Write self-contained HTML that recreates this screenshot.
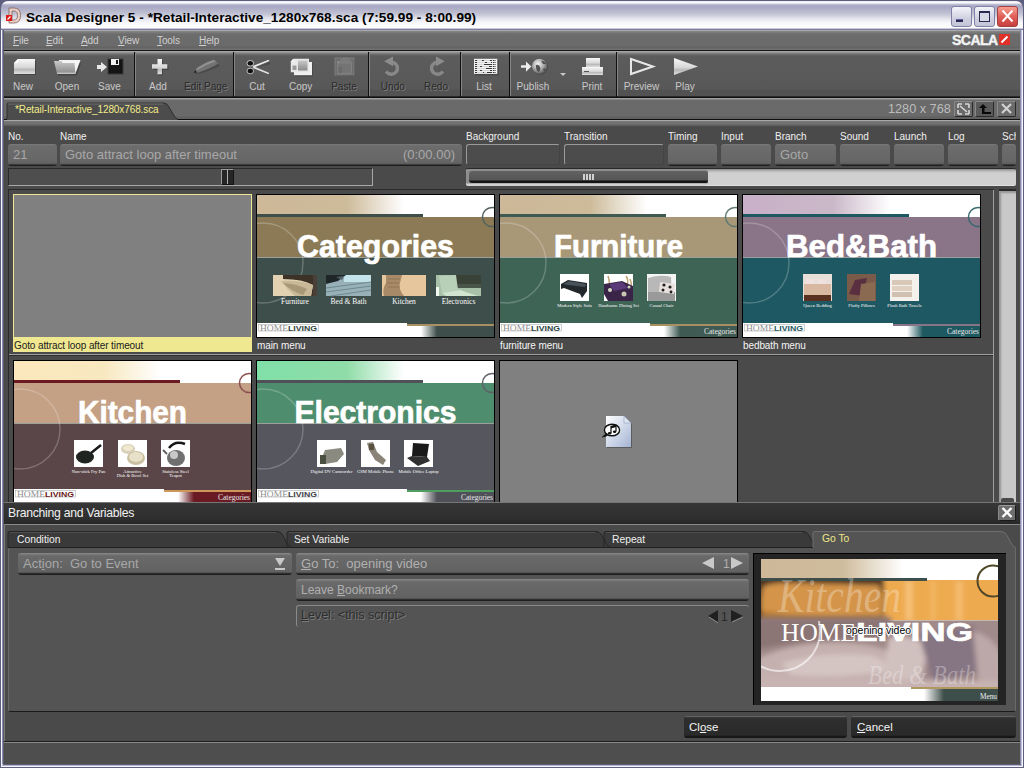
<!DOCTYPE html>
<html><head><meta charset="utf-8">
<style>
*{box-sizing:border-box}
html,body{margin:0;padding:0}
body{width:1024px;height:768px;position:relative;overflow:hidden;background:#4b4b4b;font-family:"Liberation Sans",sans-serif;}
.a{position:absolute}
.t{position:absolute;white-space:nowrap;line-height:1}
</style></head><body>

<!-- window frame -->
<div class="a" style="left:0;top:0;width:1024px;height:768px;background:#c8c8dc"></div>
<div class="a" style="left:0;top:0;width:1px;height:768px;background:#5e5e7e"></div>
<div class="a" style="left:1px;top:28px;width:1px;height:738px;background:#f6f6fc"></div>
<div class="a" style="left:2px;top:28px;width:1px;height:736px;background:#8a8aaa"></div>
<div class="a" style="left:3px;top:28px;width:1px;height:736px;background:#5c5c6c"></div>
<div class="a" style="left:1023px;top:0;width:1px;height:768px;background:#5e5e7e"></div>
<div class="a" style="left:1022px;top:28px;width:1px;height:738px;background:#f6f6fc"></div>
<div class="a" style="left:1021px;top:28px;width:1px;height:736px;background:#c0c0d8"></div>
<div class="a" style="left:1020px;top:28px;width:1px;height:736px;background:#8a8aaa"></div>
<div class="a" style="left:0;top:767px;width:1024px;height:1px;background:#5e5e7e"></div>
<div class="a" style="left:1px;top:766px;width:1022px;height:1px;background:#f6f6fc"></div>
<div class="a" style="left:2px;top:765px;width:1020px;height:1px;background:#b0b0c8"></div>
<div class="a" style="left:3px;top:764px;width:1018px;height:1px;background:#60607c"></div>
<!-- title bar -->
<div class="a" style="left:0;top:0;width:1024px;height:29px;background:#5e5e7e"></div>
<div class="a" style="left:1px;top:1px;width:1022px;height:28px;border-radius:7px 7px 0 0;background:linear-gradient(#e8e8f0 0px,#ffffff 2px,#c4c4d8 3px,#a6a6c2 5px,#b0b0c8 8px,#c2c4d4 13px,#e6e6ee 18px,#f8f8fc 22px,#ffffff 27px,#c8c8d8 27px)"></div>
<div class="a" style="left:1px;top:29px;width:1022px;height:1px;background:#7c7ca0"></div>
<div class="t" style="left:26px;top:11px;font-size:13.6px;font-weight:bold;color:#000;letter-spacing:0.04px">Scala Designer 5 - *Retail-Interactive_1280x768.sca (7:59.99 - 8:00.99)</div>


<!-- title icon -->
<svg class="a" style="left:5px;top:7px" width="17" height="17" viewBox="0 0 17 17">
<path d="M4 1 H9 Q15.5 1 15.5 8.5 Q15.5 16 9 16 H4 Z M7 4 V13 H9 Q12.5 13 12.5 8.5 Q12.5 4 9 4 Z" fill="#e8d0c8" stroke="#806058" stroke-width="0.8" fill-rule="evenodd"/>
<rect x="1" y="8" width="6" height="6" fill="#e01818"/>
<path d="M2.5 12.5 L5.5 9.5" stroke="#fff" stroke-width="1.2"/>
</svg>
<!-- title buttons -->
<div class="a" style="left:951px;top:6px;width:21px;height:21px;border:1px solid #8080a8;border-radius:3px;background:linear-gradient(#f4f4fa,#d0d0e0 60%,#c4c4d8)"></div>
<div class="a" style="left:956px;top:19px;width:7px;height:3px;background:#2a2a50;border-top:1px solid #6060a0"></div>
<div class="a" style="left:974px;top:6px;width:21px;height:21px;border:1px solid #8080a8;border-radius:3px;background:linear-gradient(#f4f4fa,#d0d0e0 60%,#c4c4d8)"></div>
<div class="a" style="left:979px;top:11px;width:11px;height:11px;border:1px solid #2a2a50;border-top:2px solid #2a2a50;background:#d8d8e6"></div>
<div class="a" style="left:997px;top:6px;width:21px;height:21px;border:1px solid #a04040;border-radius:3px;background:linear-gradient(#f8a090,#e06058 50%,#c84040)"></div>
<svg class="a" style="left:997px;top:6px" width="21" height="21"><path d="M5.5 4.5 L15.5 15.5 M15.5 4.5 L5.5 15.5" stroke="#fff" stroke-width="1.9"/></svg>

<!-- menu bar -->
<div class="a" style="left:4px;top:30px;width:1016px;height:20px;background:linear-gradient(#a8a8a8 0px,#a8a8a8 1px,#888 1px,#6c6c6c 4px,#6a6a6a 16px,#646464 17px,#646464 18px,#707070 19px,#707070 20px)"></div>
<div class="a" style="left:4px;top:50px;width:1016px;height:1px;background:#141414"></div>


<!-- menu items -->
<div class="t" style="left:13px;top:36px;font-size:10px;color:#d0d0d0;letter-spacing:-0.1px"><u>F</u>ile</div>
<div class="t" style="left:46px;top:36px;font-size:10px;color:#d0d0d0;letter-spacing:-0.1px"><u>E</u>dit</div>
<div class="t" style="left:81px;top:36px;font-size:10px;color:#d0d0d0;letter-spacing:-0.1px"><u>A</u>dd</div>
<div class="t" style="left:118px;top:36px;font-size:10px;color:#d0d0d0;letter-spacing:-0.1px"><u>V</u>iew</div>
<div class="t" style="left:157px;top:36px;font-size:10px;color:#d0d0d0;letter-spacing:-0.1px"><u>T</u>ools</div>
<div class="t" style="left:199px;top:36px;font-size:10px;color:#d0d0d0;letter-spacing:-0.1px"><u>H</u>elp</div>
<div class="t" style="left:952px;top:33px;font-size:14px;font-weight:bold;color:#f4f4f4;letter-spacing:-0.5px;-webkit-text-stroke:0.4px #f4f4f4">SCALA</div>
<div class="a" style="left:999px;top:34px;width:11px;height:11px;background:#e03028"></div>
<svg class="a" style="left:999px;top:34px" width="11" height="11"><path d="M2.5 8.5 L8.5 2.5" stroke="#fff" stroke-width="2"/></svg>

<!-- toolbar -->
<div class="a" style="left:4px;top:51px;width:1016px;height:46px;background:linear-gradient(#b0b0b0 0px,#9a9a9a 1px,#8a8a8a 2px,#707070 3px,#5c5c5c 5px,#585858 38px,#525252 39px,#525252 45px)"></div>
<div class="a" style="left:4px;top:96px;width:1016px;height:1px;background:#2a2a2a"></div>
<div class="a" style="left:4px;top:97px;width:1016px;height:1px;background:#101010"></div>


<!-- toolbar separators -->
<div class="a" style="left:134px;top:52px;width:1px;height:45px;background:#101010"></div><div class="a" style="left:135px;top:52px;width:1px;height:44px;background:#858585"></div>
<div class="a" style="left:233px;top:52px;width:1px;height:45px;background:#101010"></div><div class="a" style="left:234px;top:52px;width:1px;height:44px;background:#858585"></div>
<div class="a" style="left:368px;top:52px;width:1px;height:45px;background:#101010"></div><div class="a" style="left:369px;top:52px;width:1px;height:44px;background:#858585"></div>
<div class="a" style="left:460px;top:52px;width:1px;height:45px;background:#101010"></div><div class="a" style="left:461px;top:52px;width:1px;height:44px;background:#858585"></div>
<div class="a" style="left:509px;top:52px;width:1px;height:45px;background:#101010"></div><div class="a" style="left:510px;top:52px;width:1px;height:44px;background:#858585"></div>
<div class="a" style="left:616px;top:52px;width:1px;height:45px;background:#101010"></div><div class="a" style="left:617px;top:52px;width:1px;height:44px;background:#858585"></div>
<!-- toolbar labels -->
<div class="t" style="left:-27px;width:100px;text-align:center;top:82px;font-size:10px;color:#c8c8c8">New</div>
<div class="t" style="left:17px;width:100px;text-align:center;top:82px;font-size:10px;color:#c8c8c8">Open</div>
<div class="t" style="left:59.5px;width:100px;text-align:center;top:82px;font-size:10px;color:#c8c8c8">Save</div>
<div class="t" style="left:108px;width:100px;text-align:center;top:82px;font-size:10px;color:#c8c8c8">Add</div>
<div class="t" style="left:155.7px;width:100px;text-align:center;top:82px;font-size:10px;color:#2a2a2a;text-shadow:1px 1px 0 #7a7a7a">Edit Page</div>
<div class="t" style="left:207px;width:100px;text-align:center;top:82px;font-size:10px;color:#c8c8c8">Cut</div>
<div class="t" style="left:250.7px;width:100px;text-align:center;top:82px;font-size:10px;color:#c8c8c8">Copy</div>
<div class="t" style="left:294px;width:100px;text-align:center;top:82px;font-size:10px;color:#2a2a2a;text-shadow:1px 1px 0 #7a7a7a">Paste</div>
<div class="t" style="left:342.8px;width:100px;text-align:center;top:82px;font-size:10px;color:#2a2a2a;text-shadow:1px 1px 0 #7a7a7a">Undo</div>
<div class="t" style="left:386px;width:100px;text-align:center;top:82px;font-size:10px;color:#2a2a2a;text-shadow:1px 1px 0 #7a7a7a">Redo</div>
<div class="t" style="left:434px;width:100px;text-align:center;top:82px;font-size:10px;color:#c8c8c8">List</div>
<div class="t" style="left:483px;width:100px;text-align:center;top:82px;font-size:10px;color:#c8c8c8">Publish</div>
<div class="t" style="left:542px;width:100px;text-align:center;top:82px;font-size:10px;color:#c8c8c8">Print</div>
<div class="t" style="left:591.5px;width:100px;text-align:center;top:82px;font-size:10px;color:#c8c8c8">Preview</div>
<div class="t" style="left:635px;width:100px;text-align:center;top:82px;font-size:10px;color:#c8c8c8">Play</div>

<!-- toolbar icons -->
<svg class="a" style="left:0;top:50px" width="720" height="32" viewBox="0 50 720 32">
<defs>
<linearGradient id="gw" x1="0" y1="0" x2="0" y2="1"><stop offset="0" stop-color="#f8f8f8"/><stop offset="0.55" stop-color="#d8d8d8"/><stop offset="0.7" stop-color="#b8b8b8"/><stop offset="1" stop-color="#e0e0e0"/></linearGradient>
<linearGradient id="gf" x1="0" y1="0" x2="0" y2="1"><stop offset="0" stop-color="#c8c8c8"/><stop offset="1" stop-color="#8a8a8a"/></linearGradient>
<linearGradient id="gd" x1="0" y1="0" x2="0" y2="1"><stop offset="0" stop-color="#808080"/><stop offset="1" stop-color="#5a5a5a"/></linearGradient>
<radialGradient id="gg" cx="0.4" cy="0.35" r="0.7"><stop offset="0" stop-color="#f4f4f4"/><stop offset="0.55" stop-color="#a8a8a8"/><stop offset="1" stop-color="#505050"/></radialGradient>
</defs>
<!-- shadows -->
<g fill="#333" opacity="0.55">
<path d="M15 61 H36 V75 H15 Z"/>
<path d="M56 63 H81 L77 75.5 H58 Z"/>
<path d="M153.5 65.5 H168.5 V70 H153.5 Z M158.5 60 H163 V75.5 H158.5 Z"/>
</g>
<!-- New -->
<path d="M18 59 H35 V74 H14 V63 Z" fill="url(#gw)"/>
<path d="M14 63 L18 59 V63 Z" fill="#fff"/>
<!-- Open -->
<path d="M59 60 H80.5 L75.5 73.5 H59 Z" fill="#f4f4f4"/>
<path d="M54 61 H61.5 L62.5 63 H74.5 L75.5 73.7 H57 Z" fill="url(#gf)"/>
<path d="M57 72.7 H75.4 V73.7 H57 Z" fill="#d8d8d8"/>
<!-- Save -->
<path d="M97 65 H101 V62 L107 67 L101 72 V69 H97 Z" fill="#e8e8e8"/>
<rect x="108" y="59" width="15" height="15" fill="#141414" stroke="#3a3a3a" stroke-width="1"/>
<rect x="111" y="59" width="8" height="6" fill="#f0f0f0"/>
<rect x="116" y="60" width="2" height="4" fill="#141414"/>
<!-- Add -->
<path d="M157.5 59 H162 V64.3 H167.3 V68.8 H162 V74.2 H157.5 V68.8 H152 V64.3 H157.5 Z" fill="url(#gw)"/>
<!-- Edit Page pencil -->
<path d="M195 74 Q198 71 205 67 L216 62 L220 66 L208 71 Q200 74 195 74 Z" fill="#3a3a3a" opacity="0.5"/>
<path d="M193.5 72.8 L196 69 Q202 64 212 60.5 L214.5 60 L218 63.5 Q216 65.5 209 68.5 Q201 72 197 72.8 Z" fill="#727272"/>
<path d="M196 69 Q202 64 212 60.5 L214.5 60 L215.5 61.5 Q206 64.5 197.5 70 Z" fill="#909090"/>
<path d="M193.5 72.8 L195.5 70 L197 72.8 Z" fill="#202020"/>
<!-- Cut -->
<g fill="#3a3a3a" opacity="0.5"><path d="M255 68 L270 62 L270 64 Z M255 68 L270 75 L270 73 Z"/></g>
<path d="M254 67.5 L269.5 61 L268.5 59.8 L252.5 66 Z" fill="#ececec"/>
<path d="M254 66.5 L269.5 73 L268.5 74.2 L252.5 68 Z" fill="#e0e0e0"/>
<ellipse cx="250.3" cy="63.3" rx="3.3" ry="2.8" fill="#101010" stroke="#d8d8d8" stroke-width="0.9"/>
<ellipse cx="250.3" cy="71" rx="3.3" ry="2.8" fill="#101010" stroke="#c8c8c8" stroke-width="0.9"/>
<!-- Copy -->
<rect x="295" y="63" width="18" height="13.5" fill="#3a3a3a" opacity="0.5"/>
<rect x="294" y="62" width="18" height="13.2" fill="#f0f0f0"/>
<path d="M293.5 58.8 H309 V72.2 H290.8 V61.5 Z" fill="#e8e8e8"/>
<path d="M290.8 61.5 L293.5 58.8 V61.5 Z" fill="#ffffff"/>
<rect x="298" y="60.5" width="9.5" height="10" fill="url(#gf)"/>
<rect x="292.5" y="65.5" width="4" height="4.5" fill="#9a9a9a"/>
<!-- Paste -->
<rect x="336" y="59" width="19" height="17" fill="#3a3a3a" opacity="0.4"/>
<rect x="335" y="58" width="19" height="17" fill="#6c6c6c" stroke="#7e7e7e" stroke-width="1"/>
<path d="M338 63 Q341 58 344 57.5 H347 Q350 58 353 63 Z" fill="#7a7a7a"/>
<rect x="337.5" y="63" width="14" height="10.5" fill="#747474" stroke="#868686" stroke-width="0.8"/>
<rect x="338.5" y="67" width="3.5" height="6" fill="#6a6a6a"/>
<rect x="337" y="61" width="2" height="2" fill="#8a8a8a"/>
<!-- Undo -->
<path d="M392 62.3 A5.9 5.9 0 1 1 391 74.2 Q388 74 386 71.5" fill="none" stroke="#888888" stroke-width="3.4"/>
<path d="M384.2 61.2 L393 56.6 V66.2 Z" fill="#8c8c8c"/>
<!-- Redo -->
<path d="M437 62.3 A5.9 5.9 0 1 0 438 74.2 Q441 74 443 71.5" fill="none" stroke="#888888" stroke-width="3.4"/>
<path d="M444.8 61.2 L436 56.6 V66.2 Z" fill="#8c8c8c"/>
<!-- List -->
<rect x="475" y="60" width="24" height="15.5" fill="#3a3a3a" opacity="0.5"/>
<rect x="474" y="58.8" width="23.3" height="15.1" fill="#f2f2f2"/>
<path d="M475 60.5 H496 M475 62.5 H496 M475 64.5 H496 M475 66.5 H496 M475 68.5 H496 M475 70.5 H496 M475 72.5 H496" stroke="#3a3a3a" stroke-width="1"/>
<path d="M477 60.5 H482 M484 60.5 H490 M477 62.5 H485 M487 62.5 H491 M477 64.5 H484 M477 66.5 H480 M482 66.5 H489 M477 68.5 H486 M477 70.5 H480 M482 70.5 H490 M477 72.5 H483 M484 72.5 H487 M492 60.5 H493 M494.5 60.5 H495.5 M492 62.5 H493 M494.5 62.5 H495.5 M492 64.5 H493 M494.5 64.5 H495.5 M492 66.5 H493 M494.5 66.5 H495.5 M492 68.5 H493 M494.5 68.5 H495.5 M492 70.5 H493 M494.5 70.5 H495.5 M492 72.5 H493 M494.5 72.5 H495.5" stroke="#e8e8e8" stroke-width="0.9"/>
<!-- Publish -->
<path d="M521 65.3 H526 V61.5 L531.3 66.5 L526 71.8 V67.7 H521 Z" fill="#ececec"/>
<circle cx="540" cy="66.8" r="8" fill="#3a3a3a" opacity="0.5"/>
<circle cx="539.5" cy="66.3" r="7.6" fill="url(#gg)"/>
<path d="M536 65 Q539 64 540 67 Q541 70 538.5 72 Q535.5 70 536 65 Z M541 60.5 Q545 61 546 64 L543 64 Z M544 68 Q546 69 545 71 L543 70 Z" fill="#404040" opacity="0.85"/>
<path d="M560 73 H566 L563 76 Z" fill="#c8c8c8"/>
<!-- Print -->
<rect x="586" y="58" width="14" height="9" fill="url(#gw)"/>
<rect x="582" y="67" width="21" height="8" fill="url(#gw)"/>
<rect x="584" y="71" width="5" height="1" fill="#555"/>
<!-- Preview -->
<path d="M631 59 L653 66.5 L631 74 Z" fill="none" stroke="#e8e8e8" stroke-width="2"/>
<!-- Play -->
<path d="M674 58 L698 66.5 L674 75 Z" fill="url(#gw)"/>
</svg>

<!-- tab bar -->
<div class="a" style="left:4px;top:98px;width:1016px;height:21px;background:linear-gradient(#a0a0a0 0px,#a0a0a0 1px,#6a6a6a 2px,#6a6a6a 18px,#606060 19px,#606060 21px)"></div>
<div class="a" style="left:4px;top:119px;width:1016px;height:1px;background:#101010"></div>

<!-- properties panel -->
<div class="a" style="left:4px;top:120px;width:1016px;height:68px;background:linear-gradient(#a8a8a8 0px,#a8a8a8 1px,#7a7a7a 1px,#6a6a6a 5px,#505050 6px,#4a4a4a 7px)"></div>


<!-- document tab -->

<svg class="a" style="left:4px;top:102px" width="180" height="18" viewBox="4 102 180 18">
<path d="M7 120 V104 Q7 103 8 103 H164 Q167 103 169 107 L173 114 Q175 118 178 120 Z" fill="#4c4c4c"/>
<path d="M7 119 V104 Q7 103 8 103 H164 Q167 103 169 107 L173 114 Q175 118 178 119.5" fill="none" stroke="#2e2e2e" stroke-width="1"/>
<path d="M8 104 H163" stroke="#6e6e6e" stroke-width="1"/>
</svg>
<div class="a" style="left:178px;top:119px;width:842px;height:1px;background:#101010"></div>
<div class="a" style="left:4px;top:119px;width:3px;height:1px;background:#101010"></div>
<div class="t" style="left:15px;top:105px;font-size:10px;color:#f4ec8c;letter-spacing:-0.1px">*Retail-Interactive_1280x768.sca</div>
<div class="t" style="left:888px;top:103px;font-size:12.7px;color:#bcbcbc">1280 x 768</div>
<div class="a" style="left:954px;top:101px;width:19px;height:16px;background:#6a6a6a;border:1px solid #8a8a8a;border-right-color:#2a2a2a;border-bottom-color:#2a2a2a;border-radius:2px"></div>
<div class="a" style="left:975px;top:101px;width:19px;height:16px;background:#5a5a5a;border:1px solid #8a8a8a;border-right-color:#2a2a2a;border-bottom-color:#2a2a2a;border-radius:2px"></div>
<div class="a" style="left:997px;top:101px;width:19px;height:16px;background:#6a6a6a;border:1px solid #8a8a8a;border-right-color:#2a2a2a;border-bottom-color:#2a2a2a;border-radius:2px"></div>
<svg class="a" style="left:954px;top:101px" width="19" height="16"><path d="M4 3 H8 M4 3 V7 M15 3 H11 M15 3 V7 M4 13 H8 M4 13 V9 M15 13 H11 M15 13 V9 M6 5 L13 11" stroke="#d8d8d8" stroke-width="1.6" fill="none"/></svg>
<svg class="a" style="left:975px;top:101px" width="19" height="16"><path d="M4 7 L8 3 L12 7 H9.5 V11 H16 V13 H7 V7 Z" fill="#080808"/></svg>
<svg class="a" style="left:997px;top:101px" width="19" height="16"><path d="M5 3 L14 12 M14 3 L5 12" stroke="#d0d0d0" stroke-width="2.2"/></svg>
<div class="t" style="left:8px;top:131.5px;font-size:10px;color:#f0f0f0">No.</div>
<div class="t" style="left:60px;top:131.5px;font-size:10px;color:#f0f0f0">Name</div>
<div class="t" style="left:466px;top:131.5px;font-size:10px;color:#f0f0f0">Background</div>
<div class="t" style="left:564px;top:131.5px;font-size:10px;color:#f0f0f0">Transition</div>
<div class="t" style="left:668px;top:131.5px;font-size:10px;color:#f0f0f0">Timing</div>
<div class="t" style="left:721px;top:131.5px;font-size:10px;color:#f0f0f0">Input</div>
<div class="t" style="left:775px;top:131.5px;font-size:10px;color:#f0f0f0">Branch</div>
<div class="t" style="left:840px;top:131.5px;font-size:10px;color:#f0f0f0">Sound</div>
<div class="t" style="left:894px;top:131.5px;font-size:10px;color:#f0f0f0">Launch</div>
<div class="t" style="left:948px;top:131.5px;font-size:10px;color:#f0f0f0">Log</div>
<div class="a" style="left:1002px;top:128px;width:14px;height:14px;overflow:hidden"><div class="t" style="left:0;top:3.5px;font-size:10px;color:#f0f0f0">Sch</div></div>
<div class="a" style="left:8px;top:144px;width:49px;height:22px;border-radius:3px;background:linear-gradient(#7a7a7a 0px,#6c6c6c 2px,#666 18px,#5a5a5a 20px,#1e1e1e 21px)"></div>
<div class="a" style="left:60px;top:144px;width:402px;height:22px;border-radius:3px;background:linear-gradient(#7a7a7a 0px,#6c6c6c 2px,#666 18px,#5a5a5a 20px,#1e1e1e 21px)"></div>
<div class="a" style="left:668px;top:144px;width:49px;height:22px;border-radius:3px;background:linear-gradient(#7a7a7a 0px,#6c6c6c 2px,#666 18px,#5a5a5a 20px,#1e1e1e 21px)"></div>
<div class="a" style="left:721px;top:144px;width:50px;height:22px;border-radius:3px;background:linear-gradient(#7a7a7a 0px,#6c6c6c 2px,#666 18px,#5a5a5a 20px,#1e1e1e 21px)"></div>
<div class="a" style="left:775px;top:144px;width:61px;height:22px;border-radius:3px;background:linear-gradient(#7a7a7a 0px,#6c6c6c 2px,#666 18px,#5a5a5a 20px,#1e1e1e 21px)"></div>
<div class="a" style="left:840px;top:144px;width:50px;height:22px;border-radius:3px;background:linear-gradient(#7a7a7a 0px,#6c6c6c 2px,#666 18px,#5a5a5a 20px,#1e1e1e 21px)"></div>
<div class="a" style="left:894px;top:144px;width:50px;height:22px;border-radius:3px;background:linear-gradient(#7a7a7a 0px,#6c6c6c 2px,#666 18px,#5a5a5a 20px,#1e1e1e 21px)"></div>
<div class="a" style="left:948px;top:144px;width:50px;height:22px;border-radius:3px;background:linear-gradient(#7a7a7a 0px,#6c6c6c 2px,#666 18px,#5a5a5a 20px,#1e1e1e 21px)"></div>
<div class="a" style="left:1002px;top:144px;width:14px;height:22px;border-radius:3px;background:linear-gradient(#7a7a7a 0px,#6c6c6c 2px,#666 18px,#5a5a5a 20px,#1e1e1e 21px)"></div>
<div class="a" style="left:466px;top:144px;width:94px;height:21px;border-radius:3px;border-top:1px solid #9a9a9a;border-left:1px solid #9a9a9a;border-right:1px solid #444;border-bottom:1px solid #444;background:#4c4c4c"></div>
<div class="a" style="left:564px;top:144px;width:100px;height:21px;border-radius:3px;border-top:1px solid #9a9a9a;border-left:1px solid #9a9a9a;border-right:1px solid #444;border-bottom:1px solid #444;background:#4c4c4c"></div>
<div class="t" style="left:13px;top:148px;font-size:13px;color:#a8a8a8">21</div>
<div class="t" style="left:65px;top:148px;font-size:13px;color:#a8a8a8">Goto attract loop after timeout</div>
<div class="t" style="left:355px;width:100px;text-align:right;top:148px;font-size:13px;color:#a8a8a8">(0:00.00)</div>
<div class="t" style="left:780px;top:148px;font-size:13px;color:#a8a8a8">Goto</div>
<!-- left slider track -->
<div class="a" style="left:8px;top:168px;width:365px;height:18px;background:#4e4e4e;border-top:1px solid #2a2a2a;border-left:1px solid #2a2a2a;border-bottom:1px solid #a8a8a8;border-right:1px solid #a8a8a8"></div>
<div class="a" style="left:221px;top:169px;width:13px;height:16px;background:#262626;border-top:1px solid #9a9a9a;border-left:1px solid #9a9a9a;border-right:1px solid #141414;border-bottom:1px solid #141414"></div>
<div class="a" style="left:227px;top:170px;width:1px;height:14px;background:#b0b0b0"></div>
<!-- h scrollbar -->
<div class="a" style="left:466px;top:168px;width:550px;height:18px;background:linear-gradient(#888 0px,#b8b8b8 2px,#d0d0d0 4px);border-top:1px solid #2a2a2a;border-bottom:1px solid #e0e0e0;border-radius:2px"></div>
<div class="a" style="left:466px;top:169px;width:242px;height:17px;border-radius:4px;background:linear-gradient(#8e8e8e 0px,#8e8e8e 14px,#d0d0d0 15px,#d0d0d0 17px);"></div>
<div class="a" style="left:469px;top:171px;width:239px;height:12px;border-radius:3px 2px 2px 3px;background:linear-gradient(#626262,#555 9px,#141414 10px,#141414 12px)"></div>
<div class="a" style="left:583px;top:174px;width:11px;height:6px;background:repeating-linear-gradient(90deg,#d0d0d0 0 2px,transparent 2px 3px)"></div>

<!-- thumbnails area -->
<div class="a" style="left:4px;top:188px;width:1016px;height:315px;background:#4a4a4a"></div>

<!-- THUMBS START -->
<div class="a" style="left:8px;top:189px;width:986px;height:1px;background:#2a2a2a"></div>
<div class="a" style="left:8px;top:189px;width:1px;height:314px;background:#2a2a2a"></div>
<div class="a" style="left:993px;top:190px;width:1px;height:313px;background:#a0a0a0"></div>
<div class="a" style="left:9px;top:354px;width:984px;height:1px;background:#a0a0a0"></div>
<div class="a" style="left:9px;top:355px;width:984px;height:1px;background:#2e2e2e"></div>
<div class="a" style="left:999px;top:189px;width:17px;height:314px;background:#c8c8c8;border-top:2px solid #2a2a2a;box-shadow:inset 2px 2px 2px rgba(0,0,0,0.25)"></div>
<div class="a" style="left:1001px;top:498px;width:13px;height:5px;background:#4a4a4a;border-radius:2px 2px 0 0"></div>
<div class="a" style="left:13px;top:194px;width:239px;height:158px;border:1px solid #f0e890;background:#f0e890"></div>
<div class="a" style="left:14px;top:195px;width:237px;height:142px;background:#808080"></div>
<div class="t" style="left:14px;top:341px;font-size:10px;color:#202020;letter-spacing:-0.1px">Goto attract loop after timeout</div>
<div class="a" style="left:256px;top:194px;width:239px;height:144px;background:#000"></div>
<svg class="a" style="left:257px;top:195px" width="237" height="142" viewBox="0 0 237 142"><defs><linearGradient id="tg2" x1="0" x2="1"><stop offset="0" stop-color="#cdb898"/><stop offset="0.38" stop-color="#cdbb9a"/><stop offset="0.62" stop-color="#ffffff"/></linearGradient><linearGradient id="bg2" x1="0" x2="1"><stop offset="0" stop-color="#ffffff"/><stop offset="1" stop-color="#3e4e4a"/></linearGradient><clipPath id="cp2"><rect width="237" height="142"/></clipPath></defs><g clip-path="url(#cp2)"><rect width="237" height="142" fill="#fff"/><rect width="237" height="19" fill="url(#tg2)"/><rect y="19" width="166" height="3" fill="#3e4e4a"/><rect y="22" width="237" height="40" fill="#8b7a55"/><rect y="62" width="237" height="1" fill="#9aa09c"/><rect y="63" width="237" height="65" fill="#3e4e4a"/><rect x="150" y="128" width="87" height="1" fill="#3e4e4a"/><rect x="150" y="129" width="87" height="2" fill="#a89060"/><rect x="164" y="131" width="16" height="11" fill="url(#bg2)"/><rect x="180" y="131" width="57" height="11" fill="#3e4e4a"/><circle cx="6" cy="68" r="40" fill="none" stroke="#ffffff" stroke-opacity="0.22" stroke-width="1.5"/><circle cx="235" cy="22" r="9.5" fill="none" stroke="#55625e" stroke-width="1.5"/><text x="40.0" y="62" font-family="Liberation Sans" font-weight="bold" font-size="31" fill="#fff" stroke="#fff" stroke-width="0.7" textLength="157" lengthAdjust="spacingAndGlyphs">Categories</text><g transform="translate(16,80)"><rect width="44" height="21" fill="#e2d2b2"/><path d="M10 0 H44 V21 H38 L40 10 Q30 4 10 4 Z" fill="#3c3228"/><path d="M8 6 Q25 5 40 10 L38 21 H22 Q14 14 8 6 Z" fill="#c8b898"/><path d="M10 8 Q24 9 34 14 L30 20 Q18 16 10 8 Z" fill="#a89878"/><rect x="40" y="0" width="4" height="21" fill="#4a4038"/></g><text x="38.0" y="108.5" text-anchor="middle" font-family="Liberation Serif" font-size="7.5" fill="#ffffff">Furniture</text><g transform="translate(69,80)"><rect width="45" height="21" fill="#98b0b8"/><rect x="18" y="0" width="27" height="7" fill="#c4e2ea"/><path d="M0 0 H20 L12 6 L0 9 Z" fill="#1e2628"/><path d="M10 2 L18 1 L16 5 Z" fill="#506068"/><path d="M0 13 L45 7 M0 17 L45 11 M5 21 L45 15" stroke="#708890" stroke-width="1"/></g><text x="91.5" y="108.5" text-anchor="middle" font-family="Liberation Serif" font-size="7.5" fill="#ffffff">Bed &amp; Bath</text><g transform="translate(125,80)"><rect width="44" height="21" fill="#e6c69c"/><path d="M4 0 H20 L18 8 Q16 14 22 21 H2 Q0 14 4 8 Z" fill="#a88a68"/><path d="M6 4 H18 M5 8 H17 M6 12 H18" stroke="#8a7050" stroke-width="0.8"/></g><text x="147.0" y="108.5" text-anchor="middle" font-family="Liberation Serif" font-size="7.5" fill="#ffffff">Kitchen</text><g transform="translate(179,80)"><rect width="45" height="21" fill="#a8c0a8"/><rect x="20" y="0" width="25" height="12" fill="#3a4238"/><path d="M20 9 H45 V13 H20 Z" fill="#4a5448"/><path d="M3 1 L20 0 L22 15 L6 18 Z" fill="#b8d0b8"/><path d="M6 18 L24 15 L42 21 H10 Z" fill="#d0e4d0"/><rect x="0" y="12" width="3" height="9" fill="#f0f8f0"/></g><text x="201.5" y="108.5" text-anchor="middle" font-family="Liberation Serif" font-size="7.5" fill="#ffffff">Electronics</text><rect x="1.5" y="129.5" width="60" height="6.5" fill="#fff" stroke="#a8b0b0" stroke-width="0.6"/><text x="3" y="135.5" font-family="Liberation Serif" font-size="8" fill="#909090" textLength="28" lengthAdjust="spacingAndGlyphs">HOME</text><text x="31" y="135.5" font-family="Liberation Sans" font-weight="bold" font-size="7" fill="#2e4440" textLength="29" lengthAdjust="spacingAndGlyphs">LIVING</text></g></svg>
<div class="t" style="left:257px;top:341px;font-size:10px;color:#f4f4f4;letter-spacing:-0.1px">main menu</div>
<div class="a" style="left:499px;top:194px;width:239px;height:144px;background:#000"></div>
<svg class="a" style="left:500px;top:195px" width="237" height="142" viewBox="0 0 237 142"><defs><linearGradient id="tg3" x1="0" x2="1"><stop offset="0" stop-color="#cdb898"/><stop offset="0.38" stop-color="#cdbb9a"/><stop offset="0.62" stop-color="#ffffff"/></linearGradient><linearGradient id="bg3" x1="0" x2="1"><stop offset="0" stop-color="#ffffff"/><stop offset="1" stop-color="#3e5a52"/></linearGradient><clipPath id="cp3"><rect width="237" height="142"/></clipPath></defs><g clip-path="url(#cp3)"><rect width="237" height="142" fill="#fff"/><rect width="237" height="19" fill="url(#tg3)"/><rect y="19" width="166" height="3" fill="#3e5a52"/><rect y="22" width="237" height="40" fill="#a89878"/><rect y="62" width="237" height="1" fill="#9aa09c"/><rect y="63" width="237" height="65" fill="#3e6456"/><rect x="150" y="128" width="87" height="1" fill="#3e6456"/><rect x="150" y="129" width="87" height="2" fill="#a89060"/><rect x="164" y="131" width="16" height="11" fill="url(#bg3)"/><rect x="180" y="131" width="57" height="11" fill="#3e5a52"/><circle cx="6" cy="68" r="40" fill="none" stroke="#ffffff" stroke-opacity="0.22" stroke-width="1.5"/><circle cx="235" cy="22" r="9.5" fill="none" stroke="#607a72" stroke-width="1.5"/><text x="54.0" y="62" font-family="Liberation Sans" font-weight="bold" font-size="31" fill="#fff" stroke="#fff" stroke-width="0.7" textLength="129" lengthAdjust="spacingAndGlyphs">Furniture</text><rect x="60" y="79" width="29" height="27" fill="#fff"/><g transform="translate(60,79)"><path d="M1 10 L8 6 L27 9 L27 17 L22 24 L20 20 L4 14 L1 15 Z" fill="#22282c"/><path d="M3 10 L9 7 L26 10 L25 13 L8 11 Z" fill="#48525a"/></g><text x="74.5" y="111.5" text-anchor="middle" font-family="Liberation Serif" font-size="4.6" fill="#ffffff">Modern Style Sofa</text><rect x="104" y="79" width="29" height="27" fill="#fff"/><g transform="translate(104,79)"><path d="M4 2 Q6 8 5 12 M22 2 Q25 6 23 12 M26 5 Q28 9 27 13" stroke="#c0a070" stroke-width="1.5" fill="none"/><path d="M0 10 L18 7 L29 12 L29 27 L4 27 L0 20 Z" fill="#3a2448"/><path d="M5 10 L18 8 L24 14 L10 17 Z" fill="#5a3a78"/><circle cx="6" cy="16" r="2" fill="#d8d8c8"/><circle cx="20" cy="20" r="2.5" fill="#c8c8b0"/><circle cx="25" cy="13" r="1.5" fill="#d0d0c0"/></g><text x="118.5" y="111.5" text-anchor="middle" font-family="Liberation Serif" font-size="4.6" fill="#ffffff">Handsome Dining Set</text><rect x="147" y="79" width="29" height="27" fill="#fff"/><g transform="translate(147,79)"><rect x="0" y="0" width="29" height="27" fill="#f4f4f4"/><path d="M1 4 Q14 0 24 3 L25 27 L1 27 Z" fill="#b8b8b8"/><rect x="1" y="18" width="27" height="9" fill="#9a9a9a"/><path d="M13 8 L28 10 L27 20 L12 18 Z" fill="#e8e0dc"/><circle cx="17" cy="11" r="1.6" fill="#202020"/><circle cx="23" cy="13" r="1.6" fill="#202020"/><circle cx="16" cy="16" r="1.5" fill="#202020"/><circle cx="24" cy="18" r="1.4" fill="#202020"/></g><text x="161.5" y="111.5" text-anchor="middle" font-family="Liberation Serif" font-size="4.6" fill="#ffffff">Casual Chair</text><rect x="1.5" y="129.5" width="60" height="6.5" fill="#fff" stroke="#a8b0b0" stroke-width="0.6"/><text x="3" y="135.5" font-family="Liberation Serif" font-size="8" fill="#909090" textLength="28" lengthAdjust="spacingAndGlyphs">HOME</text><text x="31" y="135.5" font-family="Liberation Sans" font-weight="bold" font-size="7" fill="#2e4440" textLength="29" lengthAdjust="spacingAndGlyphs">LIVING</text><text x="236" y="139" text-anchor="end" font-family="Liberation Serif" font-size="9" fill="#e8e8e8" textLength="32" lengthAdjust="spacingAndGlyphs">Categories</text></g></svg>
<div class="t" style="left:500px;top:341px;font-size:10px;color:#f4f4f4;letter-spacing:-0.1px">furniture menu</div>
<div class="a" style="left:742px;top:194px;width:239px;height:144px;background:#000"></div>
<svg class="a" style="left:743px;top:195px" width="237" height="142" viewBox="0 0 237 142"><defs><linearGradient id="tg4" x1="0" x2="1"><stop offset="0" stop-color="#c8b0c8"/><stop offset="0.38" stop-color="#cab8c8"/><stop offset="0.62" stop-color="#ffffff"/></linearGradient><linearGradient id="bg4" x1="0" x2="1"><stop offset="0" stop-color="#ffffff"/><stop offset="1" stop-color="#1e5860"/></linearGradient><clipPath id="cp4"><rect width="237" height="142"/></clipPath></defs><g clip-path="url(#cp4)"><rect width="237" height="142" fill="#fff"/><rect width="237" height="19" fill="url(#tg4)"/><rect y="19" width="166" height="3" fill="#1e5860"/><rect y="22" width="237" height="40" fill="#8a7488"/><rect y="62" width="237" height="1" fill="#9aa09c"/><rect y="63" width="237" height="65" fill="#1e5862"/><rect x="150" y="128" width="87" height="1" fill="#1e5862"/><rect x="150" y="129" width="87" height="2" fill="#8a7488"/><rect x="164" y="131" width="16" height="11" fill="url(#bg4)"/><rect x="180" y="131" width="57" height="11" fill="#1e5860"/><circle cx="6" cy="68" r="40" fill="none" stroke="#ffffff" stroke-opacity="0.22" stroke-width="1.5"/><circle cx="235" cy="22" r="9.5" fill="none" stroke="#3a6a70" stroke-width="1.5"/><text x="43.0" y="62" font-family="Liberation Sans" font-weight="bold" font-size="31" fill="#fff" stroke="#fff" stroke-width="0.7" textLength="151" lengthAdjust="spacingAndGlyphs">Bed&amp;Bath</text><rect x="60" y="79" width="29" height="27" fill="#fff"/><g transform="translate(60,79)"><rect x="0" y="0" width="29" height="27" fill="#e8e0d8"/><rect x="1" y="10" width="27" height="12" fill="#d8b8a0"/><rect x="3" y="5" width="8" height="5" fill="#f0e0e0"/><rect x="15" y="5" width="8" height="5" fill="#f0e0e0"/><rect x="1" y="21" width="27" height="6" fill="#5a3020"/></g><text x="74.5" y="111.5" text-anchor="middle" font-family="Liberation Serif" font-size="4.6" fill="#ffffff">Queen Bedding</text><rect x="104" y="79" width="29" height="27" fill="#fff"/><g transform="translate(104,79)"><rect x="0" y="0" width="29" height="27" fill="#7a5a48"/><path d="M2 20 L8 6 L20 4 L16 22 Z" fill="#5a3040"/><path d="M14 10 L28 8 L28 27 L12 27 Z" fill="#8a6a50"/></g><text x="118.5" y="111.5" text-anchor="middle" font-family="Liberation Serif" font-size="4.6" fill="#ffffff">Fluffy Pillows</text><rect x="147" y="79" width="29" height="27" fill="#fff"/><g transform="translate(147,79)"><rect x="0" y="0" width="29" height="27" fill="#f4f0ec"/><rect x="2" y="6" width="20" height="5" fill="#d8c8b8"/><rect x="2" y="12" width="20" height="5" fill="#e0d0c0"/><rect x="2" y="18" width="20" height="5" fill="#d0c0b0"/></g><text x="161.5" y="111.5" text-anchor="middle" font-family="Liberation Serif" font-size="4.6" fill="#ffffff">Plush Bath Towels</text><rect x="1.5" y="129.5" width="60" height="6.5" fill="#fff" stroke="#a8b0b0" stroke-width="0.6"/><text x="3" y="135.5" font-family="Liberation Serif" font-size="8" fill="#909090" textLength="28" lengthAdjust="spacingAndGlyphs">HOME</text><text x="31" y="135.5" font-family="Liberation Sans" font-weight="bold" font-size="7" fill="#1e5860" textLength="29" lengthAdjust="spacingAndGlyphs">LIVING</text><text x="236" y="139" text-anchor="end" font-family="Liberation Serif" font-size="9" fill="#e8e8e8" textLength="32" lengthAdjust="spacingAndGlyphs">Categories</text></g></svg>
<div class="t" style="left:743px;top:341px;font-size:10px;color:#f4f4f4;letter-spacing:-0.1px">bedbath menu</div>
<div class="a" style="left:13px;top:360px;width:239px;height:143px;background:#000"></div>
<svg class="a" style="left:14px;top:361px" width="237" height="141" viewBox="0 0 237 141"><defs><linearGradient id="tg5" x1="0" x2="1"><stop offset="0" stop-color="#fce8bc"/><stop offset="0.38" stop-color="#f8e8c0"/><stop offset="0.62" stop-color="#ffffff"/></linearGradient><linearGradient id="bg5" x1="0" x2="1"><stop offset="0" stop-color="#ffffff"/><stop offset="1" stop-color="#6a1a22"/></linearGradient><clipPath id="cp5"><rect width="237" height="142"/></clipPath></defs><g clip-path="url(#cp5)"><rect width="237" height="142" fill="#fff"/><rect width="237" height="19" fill="url(#tg5)"/><rect y="19" width="166" height="3" fill="#6a1a20"/><rect y="22" width="237" height="40" fill="#c4a084"/><rect y="62" width="237" height="1" fill="#9aa09c"/><rect y="63" width="237" height="65" fill="#5a4648"/><rect x="150" y="128" width="87" height="1" fill="#5a4648"/><rect x="150" y="129" width="87" height="2" fill="#d09858"/><rect x="164" y="131" width="16" height="11" fill="url(#bg5)"/><rect x="180" y="131" width="57" height="11" fill="#6a1a22"/><circle cx="6" cy="68" r="40" fill="none" stroke="#ffffff" stroke-opacity="0.22" stroke-width="1.5"/><circle cx="235" cy="22" r="9.5" fill="none" stroke="#8a5050" stroke-width="1.5"/><text x="64.0" y="62" font-family="Liberation Sans" font-weight="bold" font-size="31" fill="#fff" stroke="#fff" stroke-width="0.7" textLength="109" lengthAdjust="spacingAndGlyphs">Kitchen</text><rect x="60" y="79" width="29" height="27" fill="#fff"/><g transform="translate(60,79)"><ellipse cx="11" cy="17" rx="9" ry="6.5" fill="#202420"/><path d="M17 13 L27 5" stroke="#181818" stroke-width="2.5"/></g><text x="74.5" y="111.5" text-anchor="middle" font-family="Liberation Serif" font-size="4.6" fill="#ffffff">Non-stick Fry Pan</text><rect x="104" y="79" width="29" height="27" fill="#fff"/><g transform="translate(104,79)"><ellipse cx="10" cy="9" rx="7" ry="5" fill="#d8d0b8"/><ellipse cx="10" cy="8" rx="5" ry="3" fill="#f0e8d0"/><ellipse cx="18" cy="18" rx="9" ry="7" fill="#c8c0a0"/><ellipse cx="18" cy="17" rx="7" ry="5" fill="#e8e0c8"/></g><text x="118.5" y="111.5" text-anchor="middle" font-family="Liberation Serif" font-size="4.6" fill="#ffffff">Attractive</text><rect x="147" y="79" width="29" height="27" fill="#fff"/><g transform="translate(147,79)"><ellipse cx="15" cy="18" rx="9" ry="8" fill="#707070"/><ellipse cx="13" cy="15" rx="4" ry="4" fill="#c8c8c8"/><path d="M8 8 Q14 0 24 4" stroke="#181818" stroke-width="2.5" fill="none"/><path d="M6 14 L2 10" stroke="#606060" stroke-width="2"/></g><text x="161.5" y="111.5" text-anchor="middle" font-family="Liberation Serif" font-size="4.6" fill="#ffffff">Stainless Steel</text><text x="118.5" y="115.5" text-anchor="middle" font-family="Liberation Serif" font-size="4.6" fill="#ffffff">Dish &amp; Bowl Set</text><text x="161.5" y="115.5" text-anchor="middle" font-family="Liberation Serif" font-size="4.6" fill="#ffffff">Teapot</text><rect x="1.5" y="129.5" width="60" height="6.5" fill="#fff" stroke="#a8b0b0" stroke-width="0.6"/><text x="3" y="135.5" font-family="Liberation Serif" font-size="8" fill="#909090" textLength="28" lengthAdjust="spacingAndGlyphs">HOME</text><text x="31" y="135.5" font-family="Liberation Sans" font-weight="bold" font-size="7" fill="#6a1a20" textLength="29" lengthAdjust="spacingAndGlyphs">LIVING</text><text x="236" y="139" text-anchor="end" font-family="Liberation Serif" font-size="9" fill="#e8e8e8" textLength="32" lengthAdjust="spacingAndGlyphs">Categories</text></g></svg>
<div class="a" style="left:256px;top:360px;width:239px;height:143px;background:#000"></div>
<svg class="a" style="left:257px;top:361px" width="237" height="141" viewBox="0 0 237 141"><defs><linearGradient id="tg6" x1="0" x2="1"><stop offset="0" stop-color="#80e0a8"/><stop offset="0.38" stop-color="#90dca8"/><stop offset="0.62" stop-color="#ffffff"/></linearGradient><linearGradient id="bg6" x1="0" x2="1"><stop offset="0" stop-color="#ffffff"/><stop offset="1" stop-color="#505058"/></linearGradient><clipPath id="cp6"><rect width="237" height="142"/></clipPath></defs><g clip-path="url(#cp6)"><rect width="237" height="142" fill="#fff"/><rect width="237" height="19" fill="url(#tg6)"/><rect y="19" width="166" height="3" fill="#505058"/><rect y="22" width="237" height="40" fill="#4e8e6e"/><rect y="62" width="237" height="1" fill="#9aa09c"/><rect y="63" width="237" height="65" fill="#55565e"/><rect x="150" y="128" width="87" height="1" fill="#55565e"/><rect x="150" y="129" width="87" height="2" fill="#4e9e5e"/><rect x="164" y="131" width="16" height="11" fill="url(#bg6)"/><rect x="180" y="131" width="57" height="11" fill="#505058"/><circle cx="6" cy="68" r="40" fill="none" stroke="#ffffff" stroke-opacity="0.22" stroke-width="1.5"/><circle cx="235" cy="22" r="9.5" fill="none" stroke="#606068" stroke-width="1.5"/><text x="37.5" y="62" font-family="Liberation Sans" font-weight="bold" font-size="31" fill="#fff" stroke="#fff" stroke-width="0.7" textLength="162" lengthAdjust="spacingAndGlyphs">Electronics</text><rect x="60" y="79" width="29" height="27" fill="#fff"/><g transform="translate(60,79)"><path d="M4 20 L8 10 L24 8 L27 14 L20 22 L8 24 Z" fill="#8a8a80"/><rect x="3" y="15" width="6" height="9" fill="#4a5040"/></g><text x="74.5" y="111.5" text-anchor="middle" font-family="Liberation Serif" font-size="4.6" fill="#ffffff">Digital DV Camcorder</text><rect x="104" y="79" width="29" height="27" fill="#fff"/><g transform="translate(104,79)"><path d="M6 3 L12 2 L16 12 L25 20 L22 25 L14 20 L8 10 Z" fill="#8a8478"/><rect x="8" y="4" width="5" height="6" fill="#5a5040"/></g><text x="118.5" y="111.5" text-anchor="middle" font-family="Liberation Serif" font-size="4.6" fill="#ffffff">GSM Mobile Phone</text><rect x="147" y="79" width="29" height="27" fill="#fff"/><g transform="translate(147,79)"><path d="M9 3 L25 4 L23 17 L8 16 Z" fill="#1a1a1a"/><path d="M3 18 L8 16 L23 17 L26 21 L14 26 Z" fill="#303030"/></g><text x="161.5" y="111.5" text-anchor="middle" font-family="Liberation Serif" font-size="4.6" fill="#ffffff">Mobile Office Laptop</text><rect x="1.5" y="129.5" width="60" height="6.5" fill="#fff" stroke="#a8b0b0" stroke-width="0.6"/><text x="3" y="135.5" font-family="Liberation Serif" font-size="8" fill="#909090" textLength="28" lengthAdjust="spacingAndGlyphs">HOME</text><text x="31" y="135.5" font-family="Liberation Sans" font-weight="bold" font-size="7" fill="#404048" textLength="29" lengthAdjust="spacingAndGlyphs">LIVING</text><text x="236" y="139" text-anchor="end" font-family="Liberation Serif" font-size="9" fill="#e8e8e8" textLength="32" lengthAdjust="spacingAndGlyphs">Categories</text></g></svg>
<div class="a" style="left:499px;top:360px;width:239px;height:143px;background:#000"></div>
<div class="a" style="left:500px;top:361px;width:237px;height:142px;background:#808080"></div>
<svg class="a" style="left:600px;top:413px" width="36" height="38" viewBox="0 0 36 38">
<defs><linearGradient id="fg" x1="0" x2="1" y1="0" y2="1"><stop offset="0" stop-color="#ffffff"/><stop offset="1" stop-color="#a4b4d4"/></linearGradient></defs>
<path d="M7 4 H25 L32 11 V35 H7 Z" fill="#303030" opacity="0.45"/>
<path d="M6 3 H24 L31 10 V34 H6 Z" fill="url(#fg)"/>
<path d="M24 3 V10 H31 Z" fill="#dfe6f2" stroke="#90a0c0" stroke-width="0.6"/>
<ellipse cx="12" cy="17" rx="7.6" ry="5.8" fill="#fff" stroke="#101010" stroke-width="1.4"/>
<path d="M6.5 20.5 L2.5 24 L7.5 22.5" fill="#101010" stroke="#101010" stroke-width="1"/>
<path d="M11 20 V13.5 L16 12 V18.5" stroke="#101010" stroke-width="1.2" fill="none"/>
<path d="M11 13.5 L16 12 V14 L11 15.5 Z" fill="#101010"/>
<ellipse cx="9.6" cy="20.2" rx="1.7" ry="1.2" fill="#101010"/>
<ellipse cx="14.6" cy="18.7" rx="1.7" ry="1.2" fill="#101010"/>
</svg>
<!-- THUMBS END -->
<!-- dialog -->
<div class="a" style="left:4px;top:502px;width:1016px;height:241px;background:#4c4c4c"></div>

<!-- DLG START -->
<div class="a" style="left:4px;top:502px;width:1016px;height:1px;background:#767676"></div>
<div class="a" style="left:4px;top:503px;width:1016px;height:21px;background:linear-gradient(#363636,#2e2e2e 80%,#262626)"></div>
<div class="t" style="left:8px;top:507px;font-size:12.2px;color:#f0f0f0;letter-spacing:-0.25px">Branching and Variables</div>
<div class="a" style="left:998px;top:505px;width:18px;height:16px;background:#6e6e6e;border-top:1px solid #9a9a9a;border-left:1px solid #8a8a8a;border-bottom:1px solid #1a1a1a;border-right:1px solid #1a1a1a;border-radius:2px"></div>
<svg class="a" style="left:998px;top:505px" width="18" height="16"><path d="M4.5 3 L13.5 12 M13.5 3 L4.5 12" stroke="#fff" stroke-width="2.4"/></svg>
<div class="a" style="left:4px;top:524px;width:1016px;height:1px;background:#8a8a8a"></div>
<div class="a" style="left:4px;top:525px;width:1016px;height:216px;background:#4a4a4a"></div>
<div class="a" style="left:4px;top:524px;width:1px;height:217px;background:#7a7a7a"></div>
<div class="a" style="left:4px;top:741px;width:1016px;height:1px;background:#1e1e1e"></div>
<svg class="a" style="left:0;top:525px" width="1024" height="24" viewBox="0 525 1024 24">
<path d="M8 548 V533 Q8 531 10 531 H277 Q281 531 283 535 L287 543 Q289 547 292 548 Z" fill="#3a3a3a"/>
<path d="M287 548 V533 Q287 531 289 531 H596 Q600 531 602 535 L606 543 Q608 547 611 548 Z" fill="#3a3a3a"/>
<path d="M604 548 V533 Q604 531 606 531 H803 Q807 531 809 535 L813 543 Q815 547 818 548 Z" fill="#3a3a3a"/>
<path d="M8 548 V533 Q8 531.5 10 531.5 H277 Q281 531.5 283 535.5 L287 543 Q289 547 292 548" stroke="#262626" fill="none" stroke-width="1"/>
<path d="M287 548 V533 Q287 531.5 289 531.5 H596 Q600 531.5 602 535.5 L606 543 Q608 547 611 548" stroke="#262626" fill="none" stroke-width="1"/>
<path d="M604 548 V533 Q604 531.5 606 531.5 H803 Q807 531.5 809 535.5 L813 543 Q815 547 818 548" stroke="#262626" fill="none" stroke-width="1"/>
<path d="M10 532.5 H276 M289 532.5 H595 M606 532.5 H802" stroke="#505050" stroke-width="1"/>
<path d="M813 549 V533 Q813 531 815 531 H1001 Q1005 531 1007 535 L1011 543 Q1013 547 1016 548 V549 Z" fill="#545454"/>
<path d="M813 548 V533 Q813 531.5 815 531.5 H1001 Q1005 531.5 1007 535.5 L1011 543 Q1013 547 1016 548" stroke="#6e6e6e" fill="none" stroke-width="1"/>
<rect x="8" y="547" width="805" height="1" fill="#202020"/>
</svg>
<div class="t" style="left:17px;top:535px;font-size:10.3px;color:#f0f0f0">Condition</div>
<div class="t" style="left:294px;top:535px;font-size:10.3px;color:#f0f0f0">Set Variable</div>
<div class="t" style="left:612px;top:535px;font-size:10.3px;color:#f0f0f0">Repeat</div>
<div class="t" style="left:822px;top:534px;font-size:10.3px;color:#f0e888">Go To</div>
<div class="a" style="left:8px;top:548px;width:1008px;height:164px;background:#545454;border-left:1px solid #6a6a6a;border-right:1px solid #6a6a6a;border-bottom:1px solid #1a1a1a;border-radius:0 0 3px 3px"></div>
<div class="a" style="left:18px;top:553px;width:274px;height:22px;border-radius:3px;background:linear-gradient(#8a8a8a 0px,#727272 2px,#6a6a6a 3px,#626262 19px,#1e1e1e 21px)"></div>
<div class="t" style="left:23px;top:557px;font-size:13px;color:#a8a8a8">Act<u>i</u>on:&nbsp; Go to Event</div>
<svg class="a" style="left:274px;top:556px" width="12" height="16"><path d="M1 2 H11 L6 10 Z" fill="#c8c8c8"/><rect x="1" y="12" width="10" height="2" fill="#c8c8c8"/></svg>
<div class="a" style="left:296px;top:553px;width:453px;height:22px;border-radius:3px;background:linear-gradient(#8a8a8a 0px,#727272 2px,#6a6a6a 3px,#626262 19px,#1e1e1e 21px)"></div>
<div class="t" style="left:301px;top:557px;font-size:13px;color:#b0b0b0"><u>G</u>o To:&nbsp; opening video</div>
<svg class="a" style="left:700px;top:555px" width="46" height="16"><path d="M2 8 L14 2 V14 Z" fill="#c8c8c8"/><path d="M31 2 L43 8 L31 14 Z" fill="#c8c8c8"/><text x="23" y="13" font-family="Liberation Sans" font-size="12" fill="#b0b0b0">1</text></svg>
<div class="a" style="left:296px;top:579px;width:453px;height:22px;border-radius:3px;background:linear-gradient(#8a8a8a 0px,#727272 2px,#6a6a6a 3px,#626262 19px,#1e1e1e 21px)"></div>
<div class="t" style="left:301px;top:583.5px;font-size:12px;color:#b0b0b0">Leave <u>B</u>ookmark?</div>
<div class="a" style="left:296px;top:605px;width:453px;height:22px;border-radius:3px;border-top:1px solid #8a8a8a;border-left:1px solid #8a8a8a"></div>
<div class="t" style="left:301px;top:609px;font-size:12.5px;color:#2e2e2e;text-shadow:1px 1px 0 #7a7a7a"><u>L</u>evel: &lt;this script&gt;</div>
<svg class="a" style="left:706px;top:608px" width="40" height="16"><path d="M2 8 L12 2 V14 Z" fill="#202020"/><path d="M25 2 L37 8 L25 14 Z" fill="#202020"/><path d="M3 9 L12 15 M26 14 L37 9" stroke="#8a8a8a" stroke-width="1"/><text x="15" y="13" font-family="Liberation Sans" font-size="12" fill="#282828">1</text></svg>
<div class="a" style="left:753px;top:553px;width:253px;height:152px;background:#242424;border-top:1px solid #000;border-left:1px solid #000"></div>
<svg class="a" style="left:761px;top:559px" width="237" height="142" viewBox="0 0 237 142">
<defs>
<linearGradient id="ptg" x1="0" x2="1"><stop offset="0" stop-color="#cdb898"/><stop offset="0.35" stop-color="#d0bd9e"/><stop offset="0.6" stop-color="#ffffff"/></linearGradient>
<linearGradient id="pbg" x1="0" x2="1"><stop offset="0" stop-color="#ffffff"/><stop offset="1" stop-color="#3e4e4a"/></linearGradient>
<linearGradient id="por" x1="0" x2="1"><stop offset="0" stop-color="#c88848"/><stop offset="0.45" stop-color="#d89850"/><stop offset="0.55" stop-color="#eeaa58"/><stop offset="1" stop-color="#f4b464"/></linearGradient>
<linearGradient id="pmv" x1="0" x2="1" y1="0" y2="1"><stop offset="0" stop-color="#988080"/><stop offset="0.5" stop-color="#b49c9a"/><stop offset="1" stop-color="#c4aeaa"/></linearGradient>
<filter id="pbl" x="-20%" y="-20%" width="140%" height="140%"><feGaussianBlur stdDeviation="4"/></filter><filter id="pbl2" x="-20%" y="-20%" width="140%" height="140%"><feGaussianBlur stdDeviation="2.5"/></filter>
<clipPath id="pcl"><rect x="0" y="62" width="237" height="66"/></clipPath>
<clipPath id="pph"><rect x="0" y="21" width="237" height="107"/></clipPath>
</defs>
<rect width="237" height="142" fill="#fff"/>
<rect width="237" height="19" fill="url(#ptg)"/>
<g clip-path="url(#pph)">
<rect y="21" width="237" height="41" fill="#e8a448"/>
<g filter="url(#pbl2)">
<rect x="-5" y="16" width="128" height="48" fill="#4a3020"/>
<path d="M2 28 Q8 23 40 24 L118 26 Q124 40 120 62 L2 62 Q-2 45 2 28 Z" fill="#d49448"/>
<path d="M2 52 Q40 60 118 56 L120 64 L0 64 Z" fill="#b07838"/>
<rect x="123" y="16" width="118" height="50" fill="#eeaa50"/>
<path d="M148 22 V62" stroke="#fcd090" stroke-width="6" opacity="0.7"/>
<path d="M172 22 V62" stroke="#f8c478" stroke-width="4" opacity="0.6"/>
<path d="M198 22 V62" stroke="#fcd090" stroke-width="6" opacity="0.55"/>
</g>
<rect y="61" width="237" height="1" fill="#c8b8b0"/>
<rect y="62" width="237" height="66" fill="#a08a8a"/>
<g filter="url(#pbl2)">
<path d="M-5 58 H130 V80 Q70 78 -5 90 Z" fill="#8c7474"/>
<path d="M-5 100 Q40 80 90 84 Q120 86 135 96 L130 128 H-5 Z" fill="#c4b0ae"/>
<path d="M20 104 Q60 92 110 96 Q125 100 128 112 Q80 120 30 116 Z" fill="#d4c4c2"/>
<path d="M128 78 Q150 74 168 88 L158 128 H120 Z" fill="#d0c0be"/>
<path d="M158 76 L212 66 L222 112 L172 124 Z" fill="#867482"/>
<path d="M212 72 Q235 78 242 100 V130 H218 Z" fill="#bca8a8"/>
<path d="M-5 118 Q60 122 120 120 L240 122 V132 H-5 Z" fill="#c8b4b2"/>
</g>
</g>
<rect y="19" width="166" height="3" fill="#3e4e4a"/>
<circle cx="19" cy="72" r="40" fill="none" stroke="#ffffff" stroke-opacity="0.6" stroke-width="2" clip-path="url(#pcl)"/>
<text x="17" y="53" font-family="Liberation Serif" font-style="italic" font-size="48" fill="#ffffff" fill-opacity="0.3" textLength="123" lengthAdjust="spacingAndGlyphs">Kitchen</text>
<text x="107" y="125" font-family="Liberation Serif" font-style="italic" font-size="27" fill="#ffffff" fill-opacity="0.3" textLength="108" lengthAdjust="spacingAndGlyphs">Bed &amp; Bath</text>
<text x="20" y="81.5" font-family="Liberation Serif" font-size="26" fill="#ffffff" textLength="75" lengthAdjust="spacingAndGlyphs">HOME</text>
<text x="95" y="81.5" font-family="Liberation Sans" font-weight="bold" font-size="25" fill="#ffffff" stroke="#fff" stroke-width="0.6" textLength="117" lengthAdjust="spacingAndGlyphs">LIVING</text>
<text x="85" y="75" font-family="Liberation Sans" font-size="10.5" fill="#000" stroke="#fff" stroke-width="2.2" paint-order="stroke" textLength="65" lengthAdjust="spacingAndGlyphs">opening video</text>
<circle cx="232" cy="22" r="15.5" fill="none" stroke="#504828" stroke-width="2"/>
<rect x="0" y="128" width="237" height="14" fill="#fff"/>
<rect x="150" y="128" width="87" height="2" fill="#b09860"/>
<rect x="163" y="130" width="20" height="12" fill="url(#pbg)"/>
<rect x="183" y="130" width="54" height="12" fill="#3e4e4a"/>
<text x="236" y="139.5" text-anchor="end" font-family="Liberation Serif" font-size="9" fill="#f0f0f0" textLength="17" lengthAdjust="spacingAndGlyphs">Menu</text>
</svg>
<div class="a" style="left:684px;top:716px;width:163px;height:22px;border-radius:3px;background:linear-gradient(#8a8a8a 0px,#3a3a3a 1px,#2e2e2e 3px,#2a2a2a 19px,#141414 21px)"></div>
<div class="a" style="left:851px;top:716px;width:165px;height:22px;border-radius:3px;background:linear-gradient(#8a8a8a 0px,#3a3a3a 1px,#2e2e2e 3px,#2a2a2a 19px,#141414 21px)"></div>
<div class="t" style="left:689px;top:721.5px;font-size:11.5px;color:#f4f4f4">Cl<u>o</u>se</div>
<div class="t" style="left:857px;top:721.5px;font-size:11.5px;color:#f4f4f4"><u>C</u>ancel</div>
<!-- DLG END -->
<!-- status bar -->
<div class="a" style="left:4px;top:742px;width:1016px;height:22px;background:linear-gradient(#8a8a8a 0px,#8a8a8a 1px,#4e4e4e 1px)"></div>

</body></html>
